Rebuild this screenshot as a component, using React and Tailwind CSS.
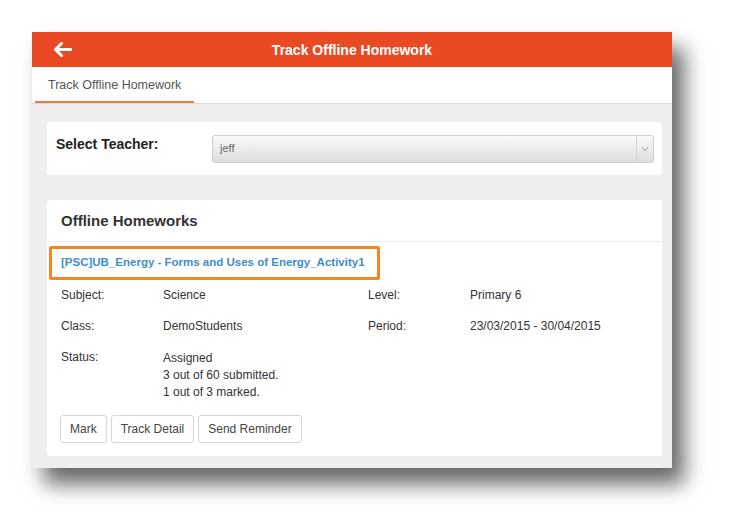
import React from "react";

const rows = [
  { label: "Subject:", value: "Science", label2: "Level:", value2: "Primary 6" },
  { label: "Class:", value: "DemoStudents", label2: "Period:", value2: "23/03/2015 - 30/04/2015" },
];

function Field({ label, children }) {
  return (
    <>
      <div className="text-[#333]">{label}</div>
      <div className="text-[#333]">{children}</div>
    </>
  );
}

export default function App() {
  return (
    <div className="min-h-[532px] bg-white pt-8 pl-8 font-['Liberation_Sans',Arial,sans-serif]">
      <div className="w-[640px] bg-[#eeeeee] shadow-[12px_16px_20px_rgba(0,0,0,0.6)]">
        {/* Header */}
        <div className="relative h-[35px] bg-[#ea4a23] flex items-center justify-center">
          <svg
            className="absolute left-[21px] top-[10px]"
            width="19"
            height="15"
            viewBox="0 0 19 15"
          >
            <path
              d="M18 7.5H3 M8.5 1.5 L2.5 7.5 L8.5 13.5"
              stroke="white"
              strokeWidth="3"
              fill="none"
              strokeLinecap="round"
              strokeLinejoin="round"
            />
          </svg>
          <h1 className="text-white font-bold text-[14px] mt-[2px]">Track Offline Homework</h1>
        </div>

        {/* Tabs */}
        <div className="h-[37px] bg-white border-b border-[#d9d9d9] flex">
          <div className="ml-[3px] w-[159px] flex items-center pl-[13px] pt-[3px] text-[12.5px] text-[#555] border-b-2 border-[#f07a3c]">
            Track Offline Homework
          </div>
        </div>

        <div className="pl-[15px] pr-[10px] pt-[18px] pb-[12px]">
          {/* Teacher select */}
          <div className="bg-white rounded-[3px] h-[53px] flex items-center pl-[9px] pr-[8px]">
            <label className="w-[156px] font-bold text-[14px] text-[#222] -mt-[8px]">Select Teacher:</label>
            <div className="flex-1 h-[28px] rounded-[3px] border border-[#cfcfcf] bg-gradient-to-b from-[#fafafa] to-[#dedede] flex items-center">
              <span className="flex-1 pl-[7px] text-[11px] text-[#666]">jeff</span>
              <span className="w-[17px] h-full border-l border-[#d4d4d4] flex items-center justify-center">
                <svg width="8" height="6" viewBox="0 0 8 6">
                  <path d="M1 1 L4 5 L7 1" stroke="#a0a0a0" strokeWidth="1" fill="none" />
                </svg>
              </span>
            </div>
          </div>

          {/* Offline homeworks */}
          <div className="mt-[25px] bg-white rounded-[3px]">
            <div className="h-[42px] flex items-center pl-[14px] border-b border-[#ececec]">
              <h2 className="font-bold text-[15px] text-[#333] mt-[2px]">Offline Homeworks</h2>
            </div>

            <div className="px-[2px] pt-[4px]">
              <div className="w-[331px] h-[34px] border-[3px] border-[#f7861f] rounded-[2px] flex items-center pl-[9px]">
                <a className="font-bold text-[11.5px] text-[#3f8ccb]">
                  [PSC]UB_Energy - Forms and Uses of Energy_Activity1
                </a>
              </div>
            </div>

            <div className="pl-[14px] pt-[8px] text-[12px] leading-[15px] grid grid-cols-[102px_205px_102px_1fr] gap-y-[16px]">
              {rows.map((r) => (
                <React.Fragment key={r.label}>
                  <Field label={r.label}>{r.value}</Field>
                  <Field label={r.label2}>{r.value2}</Field>
                </React.Fragment>
              ))}
              <div className="text-[#333]">Status:</div>
              <div className="col-span-3 text-[#333] leading-[17px]">
                <div>Assigned</div>
                <div>3 out of 60 submitted.</div>
                <div>1 out of 3 marked.</div>
              </div>
            </div>

            <div className="flex gap-[4px] pl-[13px] pt-[14px] pb-[13px]">
              {["Mark", "Track Detail", "Send Reminder"].map((b) => (
                <button
                  key={b}
                  className="h-[28px] px-[9px] border border-[#d6d6d6] rounded-[3px] bg-white text-[12px] text-[#444]"
                >
                  {b}
                </button>
              ))}
            </div>
          </div>
        </div>
      </div>
    </div>
  );
}
